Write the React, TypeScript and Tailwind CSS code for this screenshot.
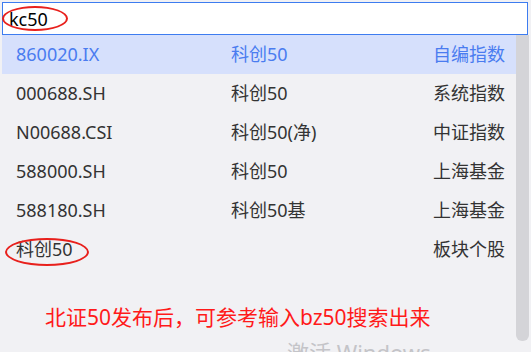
import React from "react";

const rows = [
  { code: "860020.IX", name: "科创50", type: "自编指数", active: true },
  { code: "000688.SH", name: "科创50", type: "系统指数" },
  { code: "N00688.CSI", name: "科创50(净)", type: "中证指数" },
  { code: "588000.SH", name: "科创50", type: "上海基金" },
  { code: "588180.SH", name: "科创50基", type: "上海基金" },
  { code: "科创50", name: "", type: "板块个股" },
];

export default function App() {
  return (
    <div
      className="relative w-[531px] h-[352px] overflow-hidden bg-[#f1f1f4] text-[18px] text-[#333]"
      style={{ fontFamily: "'Noto Sans', 'Noto Sans CJK SC', sans-serif" }}
    >
      {/* Search input */}
      <div className="flex pl-[2px] pt-[2px]">
        <div className="w-[526px] h-[33px] border border-[#3d7cf0] bg-white flex items-center pl-[6px] text-[18px] text-black leading-none">
          kc50
        </div>
      </div>

      {/* Dropdown */}
      <div className="flex pl-[2px]">
        <div className="flex-1">
          {rows.map((r, i) => (
            <div
              key={i}
              className={
                "grid grid-cols-[215px_1fr_auto] items-center h-[39px] pl-[14px] pr-[11px] " +
                (r.active ? "bg-[#d6e0fc] text-[#4a7cf0]" : "")
              }
            >
              <span>{r.code}</span>
              <span>{r.name}</span>
              <span>{r.type}</span>
            </div>
          ))}
          <div className="pl-[43px] pt-[33px] text-[21px] leading-[30px] text-[#ff1a1a] whitespace-nowrap">
            北证50发布后，可参考输入bz50搜索出来
          </div>
        </div>
        {/* Scrollbar */}
        <div className="w-[13px] h-[306px] bg-[#d4d4d8] rounded-b-[6px] mr-[2px]" />
      </div>

      {/* Annotations */}
      <div className="absolute left-[2px] top-[6px] w-[66px] h-[25px] border-2 border-[#e8201c] rounded-[50%]" />
      <div className="absolute left-[5px] top-[238px] w-[84px] h-[28px] border-2 border-[#e8201c] rounded-[50%]" />

      {/* Windows watermark */}
      <div className="absolute left-[287px] top-[336px] text-[22px] text-[#c4c4c8] whitespace-nowrap">
        激活 Windows
      </div>
    </div>
  );
}
